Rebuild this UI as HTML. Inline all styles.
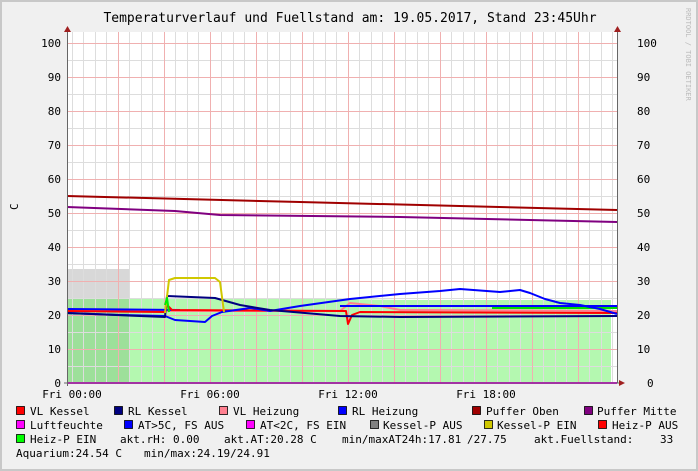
<!DOCTYPE html>
<html><head><meta charset="utf-8"><style>
html,body{margin:0;padding:0;background:#c8c8c8}
svg{display:block}
text{font-family:"DejaVu Sans Mono","Liberation Mono",monospace;fill:#000}
</style></head><body>
<svg width="698" height="471" xmlns="http://www.w3.org/2000/svg">
<rect x="0" y="0" width="698" height="471" fill="#c8c8c8"/>
<rect x="2" y="2" width="694" height="467" fill="#f0f0f0"/>
<rect x="67" y="32" width="550" height="351" fill="#fff"/>
<!-- areas -->
<polygon points="67,298 340,299 400,300 611,300 611,383 67,383" fill="#b4f8b0"/>
<rect x="67" y="269" width="62" height="29" fill="#d8d8d8"/>
<rect x="67" y="298" width="62" height="85" fill="#9de09a"/>
<!-- grid minor -->
<g stroke="#ddd" stroke-width="1">
<path d="M67 366.5H617M67 332.5H617M67 298.5H617M67 264.5H617M67 230.5H617M67 196.5H617M67 162.5H617M67 128.5H617M67 94.5H617M67 60.5H617"/>
<path d="M83.5 32V383M106.5 32V383M129.5 32V383M152.5 32V383M175.5 32V383M198.5 32V383M221.5 32V383M244.5 32V383M267.5 32V383M290.5 32V383M313.5 32V383M336.5 32V383M359.5 32V383M382.5 32V383M405.5 32V383M428.5 32V383M451.5 32V383M474.5 32V383M497.5 32V383M520.5 32V383M543.5 32V383M566.5 32V383M589.5 32V383M612.5 32V383"/>
<path d="M72.5 32V383M95.5 32V383M141.5 32V383M187.5 32V383M233.5 32V383M279.5 32V383M325.5 32V383M371.5 32V383M417.5 32V383M463.5 32V383M509.5 32V383M555.5 32V383M601.5 32V383"/>
</g>
<g stroke="#f0b0b0" stroke-width="1">
<path d="M67 349.5H617M67 315.5H617M67 281.5H617M67 247.5H617M67 213.5H617M67 179.5H617M67 145.5H617M67 111.5H617M67 77.5H617M67 43.5H617"/>
<path d="M118.5 32V383M164.5 32V383M210.5 32V383M256.5 32V383M302.5 32V383M348.5 32V383M394.5 32V383M440.5 32V383M486.5 32V383M532.5 32V383M578.5 32V383"/>
</g>
<!-- lines -->
<g fill="none" stroke-width="2" stroke-linejoin="round">
<polyline stroke="#a00000" points="67,196 300,202 617,210"/>
<polyline stroke="#800080" points="67,207 175,211 220,215 400,217 617,222"/>
<polyline stroke="#ff8090" points="67,311 340,311 350,303 380,306 400,310 617,311"/>
<polyline stroke="#0000ff" points="67,309 180,310"/>
<polyline stroke="#0000ff" points="340,306 617,306"/>
<polyline stroke="#00dd00" points="492,308 617,308"/>
<polyline stroke="#ff0000" points="67,311 165,312 167,305 172,310 346,311 348,324 352,315 360,312 617,313"/>
<polyline stroke="#0000ff" points="67,313 120,315 165,316 175,320 205,322 212,316 222,312 250,308 258,309 270,311 300,306 350,299 400,294 440,291 460,289 500,292 510,291 520,290 530,293 545,299 560,303 580,305 600,309 617,314"/>
<polyline stroke="#000080" points="67,313 165,317 167,296 215,298 240,305 270,310 340,316 400,317 617,316"/>
<polyline stroke="#d0c800" points="165,313 169,280 175,278 215,278 220,282 224,312"/>
<polyline stroke="#00ee00" points="165,305 167,298 169,312"/>
</g>
<path d="M67 383H617" stroke="#e000e0" stroke-width="2"/>
<!-- axes -->
<path d="M67.5 30V386M64 383H621" stroke="#666" stroke-width="1"/>
<path d="M617.5 32V383" stroke="#666" stroke-width="1"/>
<polygon points="67.5,26 64,32 71,32" fill="#a02020"/>
<polygon points="617.5,26 614,32 621,32" fill="#a02020"/>
<polygon points="625,383 619,380 619,386" fill="#a02020"/>
<!-- title -->
<text x="350" y="22" font-size="13" text-anchor="middle">Temperaturverlauf und Fuellstand am: 19.05.2017, Stand 23:45Uhr</text>
<text transform="translate(686,8) rotate(90)" font-size="7" fill="#bbb" style="fill:#bbb">RRDTOOL / TOBI OETIKER</text>
<text transform="translate(18,210) rotate(-90)" font-size="11">C</text>
<g font-size="11" text-anchor="end">
<text x="61" y="47">100</text><text x="61" y="81">90</text><text x="61" y="115">80</text><text x="61" y="149">70</text><text x="61" y="183">60</text><text x="61" y="217">50</text><text x="61" y="251">40</text><text x="61" y="285">30</text><text x="61" y="319">20</text><text x="61" y="353">10</text><text x="61" y="387">0</text>
</g>
<g font-size="11">
<text x="637" y="47">100</text><text x="637" y="81">90</text><text x="637" y="115">80</text><text x="637" y="149">70</text><text x="637" y="183">60</text><text x="637" y="217">50</text><text x="637" y="251">40</text><text x="637" y="285">30</text><text x="637" y="319">20</text><text x="637" y="353">10</text><text x="647" y="387">0</text>
</g>
<g font-size="11" text-anchor="middle">
<text x="72" y="398">Fri 00:00</text><text x="210" y="398">Fri 06:00</text><text x="348" y="398">Fri 12:00</text><text x="486" y="398">Fri 18:00</text>
</g>
<!-- legend -->
<g stroke="#000" stroke-width="0.8">
<rect x="16.5" y="406.5" width="8" height="8" fill="#ff0000"/>
<rect x="114.5" y="406.5" width="8" height="8" fill="#000080"/>
<rect x="219.5" y="406.5" width="8" height="8" fill="#ff8090"/>
<rect x="338.5" y="406.5" width="8" height="8" fill="#0000ff"/>
<rect x="472.5" y="406.5" width="8" height="8" fill="#a00000"/>
<rect x="584.5" y="406.5" width="8" height="8" fill="#800080"/>
<rect x="16.5" y="420.5" width="8" height="8" fill="#ff00ff"/>
<rect x="124.5" y="420.5" width="8" height="8" fill="#0000ff"/>
<rect x="246.5" y="420.5" width="8" height="8" fill="#ff00ff"/>
<rect x="370.5" y="420.5" width="8" height="8" fill="#808080"/>
<rect x="484.5" y="420.5" width="8" height="8" fill="#d0c800"/>
<rect x="598.5" y="420.5" width="8" height="8" fill="#ff0000"/>
<rect x="16.5" y="434.5" width="8" height="8" fill="#00ff00"/>
</g>
<g font-size="11">
<text x="30" y="415">VL Kessel</text>
<text x="128" y="415">RL Kessel</text>
<text x="233" y="415">VL Heizung</text>
<text x="352" y="415">RL Heizung</text>
<text x="486" y="415">Puffer Oben</text>
<text x="597" y="415">Puffer Mitte</text>
<text x="30" y="429">Luftfeuchte</text>
<text x="138" y="429">AT&gt;5C, FS AUS</text>
<text x="260" y="429">AT&lt;2C, FS EIN</text>
<text x="383" y="429">Kessel-P AUS</text>
<text x="497" y="429">Kessel-P EIN</text>
<text x="612" y="429">Heiz-P AUS</text>
<text x="30" y="443">Heiz-P EIN</text>
<text x="120" y="443">akt.rH: 0.00</text>
<text x="224" y="443">akt.AT:20.28 C</text>
<text x="342" y="443">min/maxAT24h:17.81</text>
<text x="467" y="443">/27.75</text>
<text x="534" y="443">akt.Fuellstand:</text>
<text x="660" y="443">33</text>
<text x="16" y="457">Aquarium:24.54 C</text>
<text x="144" y="457">min/max:24.19/24.91</text>
</g>
</svg>
</body></html>
